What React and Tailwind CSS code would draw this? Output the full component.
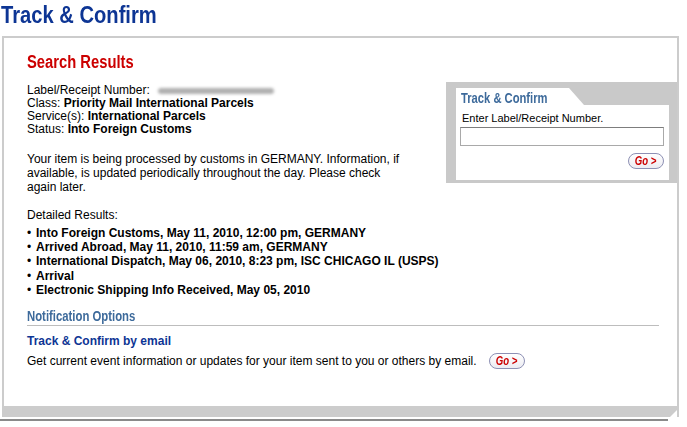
const sans = "font-['Liberation_Sans',Arial,sans-serif]";

const GoButton = () => (
  <span className="inline-flex items-center justify-center w-[36px] h-[16px] rounded-full border border-[#8d90b4] bg-gradient-to-b from-white to-[#ececf2]">
    <span className="inline-block text-[12px] leading-[12px] font-bold italic text-[#cc0000] scale-x-80">
      Go &gt;
    </span>
  </span>
)

const SideBox = () => (
  <div className="self-start w-[231px] mt-[44px] bg-[#c9c9c9] pt-[6px] pl-[10px] pr-[8px] pb-[3px]">
    <div className="w-[128px] h-[17px] bg-white pl-[5px] pt-[2px] [clip-path:polygon(0_0,113px_0,100%_100%,0_100%)]">
      <div className="origin-left scale-x-80 text-[14px] leading-[16px] font-bold text-[#3d6a9b]">
        Track &amp; Confirm
      </div>
    </div>
    <div className="bg-white pt-[7px] pl-[4px] pr-[5px] pb-[11px]">
      <div className="text-[11px] leading-[13px] text-black pl-[2px]">
        Enter Label/Receipt Number.
      </div>
      <div className="mt-[2px] h-[19px] border border-[#a9a9a9] border-t-[#7d7d7d] bg-white"></div>
      <div className="mt-[7px] flex justify-end">
        <GoButton />
      </div>
    </div>
  </div>
)

const events = [
  "Into Foreign Customs, May 11, 2010, 12:00 pm, GERMANY",
  "Arrived Abroad, May 11, 2010, 11:59 am, GERMANY",
  "International Dispatch, May 06, 2010, 8:23 pm, ISC CHICAGO IL (USPS)",
  "Arrival",
  "Electronic Shipping Info Received, May 05, 2010",
]

export default function App() {
  return (
    <div className={`${sans} bg-white w-[687px] h-[427px] overflow-hidden text-black`}>
      <div className="pt-[1px] pl-[1px] h-[29px]">
        <h1 className="origin-left scale-x-84 text-[24px] leading-[28px] font-bold text-[#0d3594]">
          Track &amp; Confirm
        </h1>
      </div>

      <div className="mt-[7px] ml-[2px] w-[677px] border-t-2 border-l-2 border-r-2 border-[#cccccc]">
        <div className="flex">
          <div className="flex-1 pl-[23px] pt-[14px]">
            <h2 className="origin-left scale-x-82 text-[18px] leading-[20px] font-bold text-[#cc0000]">
              Search Results
            </h2>
            <div className="mt-[12px] text-[12px] leading-[13px]">
              <div className="flex items-center">
                Label/Receipt Number:
                <span className="ml-[8px] inline-block w-[116px] h-[6px] rounded-full bg-[#b0b0b0] blur-[1.5px]"></span>
              </div>
              <div>Class: <b>Priority Mail International Parcels</b></div>
              <div>Service(s): <b>International Parcels</b></div>
              <div>Status: <b>Into Foreign Customs</b></div>
            </div>
            <p className="mt-[16px] w-[385px] text-[12px] leading-[14px]">
              Your item is being processed by customs in GERMANY. Information, if available, is updated periodically throughout the day. Please check again later.
            </p>
            <div className="mt-[14px] text-[12px] leading-[14px]">Detailed Results:</div>
            <ul className="mt-[4px] text-[12px] leading-[14.2px] font-bold">
              {events.map((e) => (
                <li key={e} className="flex">
                  <span className="w-[9px] font-normal">&#8226;</span>
                  <span>{e}</span>
                </li>
              ))}
            </ul>
          </div>
          <SideBox />
        </div>

        <div className="mt-[11px] pl-[23px] pr-[18px]">
          <div className="border-b border-[#bdbdbd] pb-[1px]">
            <div className="origin-left scale-x-81 text-[14px] leading-[16px] font-bold text-[#3d6a9b]">
              Notification Options
            </div>
          </div>
          <div className="mt-[8px] text-[12px] leading-[14px] font-bold text-[#0d3594]">
            Track &amp; Confirm by email
          </div>
          <div className="mt-[4px] flex items-center h-[18px] text-[12px] leading-[14px]">
            <span>Get current event information or updates for your item sent to you or others by email.</span>
            <span className="ml-[12px] flex">
              <GoButton />
            </span>
          </div>
        </div>
        <div className="mt-[36px] h-[11px] bg-[#cccccc] -mx-[2px] [clip-path:polygon(0_0,100%_0,100%_2px,calc(100%-9px)_100%,0_100%)]"></div>
      </div>
      <div className="mt-[2px] h-[2px] w-[668px] bg-[#8a8a8a]"></div>
    </div>
  )
}
